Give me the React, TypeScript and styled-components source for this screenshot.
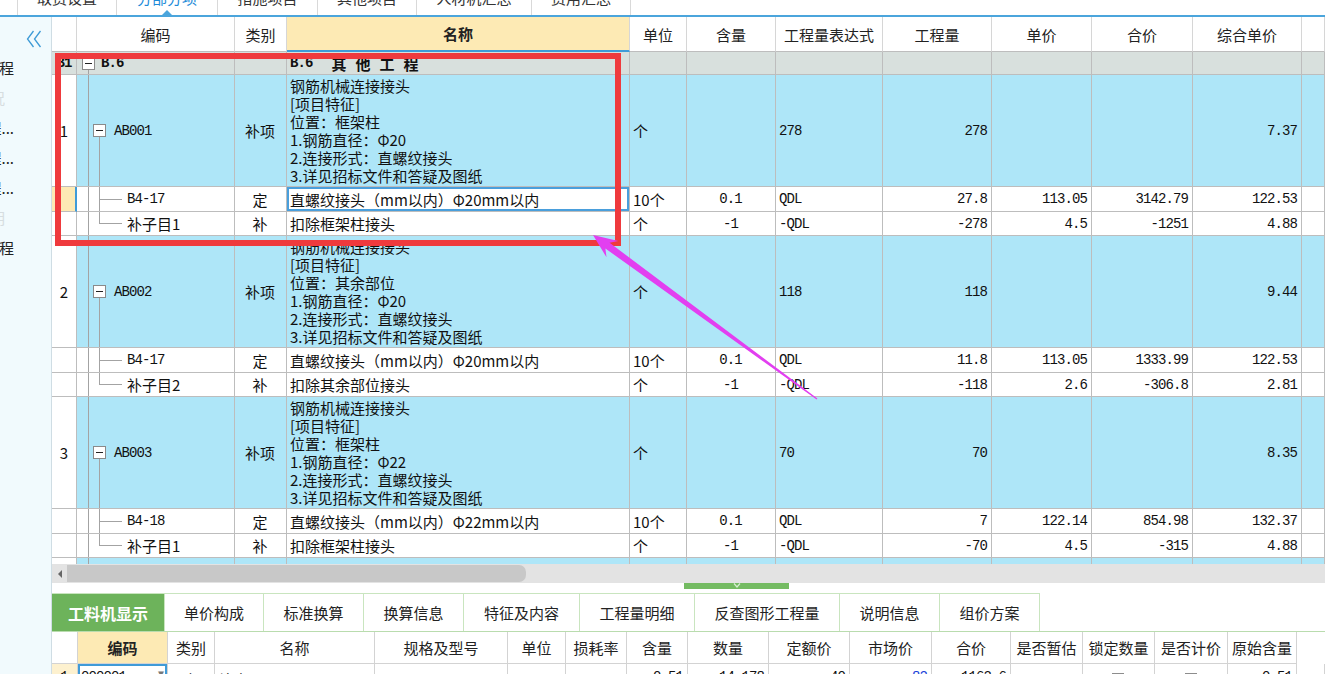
import React from "react";
import styled, { createGlobalStyle } from "styled-components";

const CJK = `"Noto Sans CJK SC", "Noto Sans", sans-serif`;
const NUM = `"Liberation Mono", "DejaVu Sans Mono", monospace`;
const LINE = "#bdbdbd";
const TREE = "#a3a3a3";
const SKY = "#aee6f8";
const GROUP = "#d8e0dd";
const CREAM = "#fdeab4";
const ACCENT = "#3f9bd8";
const LEAF = "#6db35b";

const GlobalStyle = createGlobalStyle`
  html, body { margin: 0; padding: 0; background: #fff; overflow: hidden; }
  body { font-family: ${CJK}; color: #111; }
`;

const Screen = styled.div`
  position: relative;
  width: 1325px;
  height: 674px;
  overflow: hidden;
  display: flex;
  flex-direction: column;
`;

/* ---------- top module tabs ---------- */
const TopBar = styled.div`
  flex: none;
  height: 17px;
  box-sizing: border-box;
  border-bottom: 2px solid #4ba5dc;
  padding-left: 17px;
  display: flex;
  overflow: hidden;
`;

const TopTab = styled.div<{ $w: number; $active?: boolean }>`
  position: relative;
  width: ${(p) => p.$w}px;
  height: 15px;
  box-sizing: border-box;
  border-right: 1px solid #d9d9d9;
  &:first-child { border-left: 1px solid #d9d9d9; }
  display: flex;
  justify-content: center;
  align-items: flex-start;
  font-size: 15px;
  color: ${(p) => (p.$active ? "#1c8ad8" : "#333")};
  span { line-height: 30px; margin-top: -17px; }
  ${(p) =>
    p.$active &&
    `&::after {
      content: "";
      position: absolute;
      bottom: 0;
      left: 50%;
      transform: translateX(-50%);
      border-left: 5px solid transparent;
      border-right: 5px solid transparent;
      border-bottom: 5px solid #4ba5dc;
    }`}
`;

/* ---------- layout ---------- */
const Body = styled.div`
  flex: 1;
  display: flex;
  min-height: 0;
`;

const Sidebar = styled.div`
  flex: none;
  width: 52px;
  box-sizing: border-box;
  background: #f1fafd;
  border-right: 1px solid #cfdde4;
  padding-top: 12px;
  display: flex;
  flex-direction: column;
`;

const Collapse = styled.div`
  height: 18px;
  padding-left: 26px;
  margin-bottom: 5px;
`;

const SideItem = styled.div<{ $faint?: boolean }>`
  width: ${(p) => (p.$faint ? 5 : 14)}px;
  height: 30px;
  overflow: hidden;
  display: flex;
  justify-content: flex-end;
  align-items: center;
  white-space: nowrap;
  font-size: 15px;
  color: ${(p) => (p.$faint ? "#d6dde0" : "#222")};
`;

const Main = styled.div`
  flex: 1;
  min-width: 0;
  display: flex;
  flex-direction: column;
  overflow: hidden;
`;

/* ---------- upper grid ---------- */
const COLS = "25px 158px 52px 343px 57px 89px 107px 109px 100px 101px 109px 23px";

const Viewport = styled.div`
  flex: none;
  height: 547px;
  overflow: hidden;
`;

const Row = styled.div<{ $h: number; $bg: string }>`
  display: grid;
  grid-template-columns: ${COLS};
  height: ${(p) => p.$h}px;
  background: ${(p) => p.$bg};
`;

const HeadCell = styled.div<{ $hl?: boolean }>`
  box-sizing: border-box;
  border-right: 1px solid #d6d6d6;
  border-bottom: ${(p) => (p.$hl ? `2px solid ${ACCENT}` : `1px solid ${LINE}`)};
  background: ${(p) => (p.$hl ? CREAM : "#fff")};
  font-weight: ${(p) => (p.$hl ? 700 : 400)};
  display: flex;
  align-items: center;
  justify-content: center;
  font-size: 15px;
  color: #222;
  white-space: nowrap;
  overflow: hidden;
`;

type Align = "left" | "center" | "right";

const Cell = styled.div<{ $align?: Align; $num?: boolean }>`
  box-sizing: border-box;
  min-width: 0;
  border-right: 1px solid ${LINE};
  border-bottom: 1px solid ${LINE};
  display: flex;
  align-items: center;
  justify-content: ${(p) =>
    p.$align === "right" ? "flex-end" : p.$align === "center" ? "center" : "flex-start"};
  padding: 0 4px 0 3px;
  overflow: hidden;
  white-space: nowrap;
  font-family: ${(p) => (p.$num ? NUM : CJK)};
  font-size: ${(p) => (p.$num ? "14px" : "15px")};
  letter-spacing: ${(p) => (p.$num ? "-0.9px" : "0")};
  color: #111;
`;

const RowNo = styled(Cell)<{ $sel?: boolean; $tint?: string }>`
  justify-content: center;
  padding: 0;
  background: ${(p) => (p.$sel ? CREAM : p.$tint ?? "#fff")};
  border-right: ${(p) => (p.$sel ? `2px solid ${ACCENT}` : `1px solid ${LINE}`)};
`;

type Tree = "root" | "item" | "first" | "last";
const bar = (x: string, y: string, w: string, h: string) =>
  `linear-gradient(${TREE}, ${TREE}) ${x} ${y} / ${w} ${h} no-repeat`;
const treeBg: Record<Tree, string> = {
  root: bar("11px", "100%", "1px", "50%"),
  item: [bar("11px", "0", "1px", "100%"), bar("22px", "100%", "1px", "50%")].join(","),
  first: [bar("11px", "0", "1px", "100%"), bar("22px", "0", "1px", "100%"), bar("22px", "50%", "23px", "1px")].join(","),
  last: [bar("11px", "0", "1px", "100%"), bar("22px", "0", "1px", "50%"), bar("22px", "50%", "23px", "1px")].join(","),
};

const CodeCell = styled(Cell)<{ $tree: Tree; $indent: number }>`
  padding-left: ${(p) => p.$indent}px;
  background: ${(p) => treeBg[p.$tree]};
`;

const Expander = styled.span<{ $gap: number }>`
  flex: none;
  width: 13px;
  height: 13px;
  box-sizing: border-box;
  border: 1px solid #8a8a8a;
  background: #fff;
  margin-right: ${(p) => p.$gap}px;
  display: flex;
  align-items: center;
  justify-content: center;
  &::before { content: ""; width: 7px; height: 1px; background: #222; }
`;

const NameCell = styled(Cell)<{ $selected?: boolean }>`
  ${(p) => p.$selected && `box-shadow: inset 0 0 0 2px #4a9fdc;`}
`;

const NameStack = styled.div`
  display: flex;
  flex-direction: column;
  line-height: 18px;
`;

const GroupCode = styled.span`
  font-family: ${NUM};
  font-weight: 700;
  font-size: 14px;
  letter-spacing: -0.9px;
`;

const GroupName = styled.span`
  font-weight: 700;
  letter-spacing: 9px;
  margin-left: 19px;
`;

/* ---------- scroll / splitter ---------- */
const HScroll = styled.div`
  flex: none;
  height: 19px;
  background: #e3e3e3;
  display: flex;
  align-items: center;
  padding-left: 6px;
  gap: 5px;
`;

const ScrollArrow = styled.div`
  border-top: 4px solid transparent;
  border-bottom: 4px solid transparent;
  border-right: 4px solid #666;
`;

const Thumb = styled.div`
  width: 459px;
  height: 17px;
  background: #c8c8c8;
  border-radius: 0 7px 7px 0;
`;

const Splitter = styled.div`
  flex: none;
  height: 10px;
  padding-left: 632px;
`;

const Handle = styled.div`
  width: 105px;
  height: 6px;
  background: #74bb62;
  display: flex;
  justify-content: center;
`;

/* ---------- detail pane ---------- */
const DetailTabs = styled.div`
  flex: none;
  height: 39px;
  box-sizing: border-box;
  border-bottom: 1px solid #b9dcae;
  display: flex;
`;

const DetailTab = styled.div<{ $w: number; $active?: boolean }>`
  width: ${(p) => p.$w}px;
  box-sizing: border-box;
  border: 1px solid #c9e5bf;
  border-left: none;
  border-bottom: none;
  display: flex;
  align-items: center;
  justify-content: center;
  font-size: ${(p) => (p.$active ? "16px" : "15px")};
  font-weight: ${(p) => (p.$active ? 700 : 400)};
  color: ${(p) => (p.$active ? "#fff" : "#222")};
  background: ${(p) => (p.$active ? LEAF : "#fff")};
`;

const DCOLS = "26px 90px 47px 160px 133px 58px 61px 61px 81px 81px 82px 79px 72px 72px 73px 69px 28px";

const DetailRow = styled.div<{ $h: number }>`
  flex: none;
  display: grid;
  grid-template-columns: ${DCOLS};
  height: ${(p) => p.$h}px;
`;

const DHead = styled.div<{ $hl?: boolean; $bare?: boolean }>`
  box-sizing: border-box;
  border-right: ${(p) => (p.$bare ? "none" : "1px solid #d3d3d3")};
  border-bottom: ${(p) => (p.$bare ? "none" : "1px solid #d3d3d3")};
  background: ${(p) => (p.$hl ? CREAM : "#fff")};
  font-weight: ${(p) => (p.$hl ? 700 : 400)};
  display: flex;
  align-items: center;
  justify-content: center;
  font-size: 15px;
  color: #222;
  white-space: nowrap;
  overflow: hidden;
`;

const DCell = styled(Cell)<{ $tint?: string; $blue?: boolean }>`
  align-items: flex-start;
  padding-top: 5px;
  border-color: #d3d3d3;
  background: ${(p) => p.$tint ?? "transparent"};
  color: ${(p) => (p.$blue ? "#1740d8" : "#111")};
`;

const PickCell = styled(DCell)`
  box-shadow: inset 0 0 0 2px ${ACCENT};
  justify-content: space-between;
`;

const Check = styled.span`
  width: 12px;
  height: 12px;
  box-sizing: border-box;
  border: 1px solid #8d8d8d;
  background: #fff;
  margin-top: 4px;
`;

/* ---------- annotations ---------- */
const RedFrame = styled.div`
  position: absolute;
  left: 55px;
  top: 53px;
  width: 566px;
  height: 193px;
  box-sizing: border-box;
  border: 6px solid #ef3a3d;
  pointer-events: none;
`;

const ArrowLayer = styled.svg`
  position: absolute;
  left: 0;
  top: 0;
  pointer-events: none;
`;

/* ---------- data ---------- */
type Sub = {
  code: string;
  kind: string;
  name: string;
  unit: string;
  qty: string;
  expr: string;
  amount: string;
  price: string;
  total: string;
  unitPrice: string;
  selected?: boolean;
};

type Item = {
  no: string;
  code: string;
  name: string[];
  unit: string;
  expr: string;
  amount: string;
  unitPrice: string;
  subs: Sub[];
};

const spec = (place: string, dia: string) => [
  "钢筋机械连接接头",
  "[项目特征]",
  `位置：${place}`,
  `1.钢筋直径：${dia}`,
  "2.连接形式：直螺纹接头",
  "3.详见招标文件和答疑及图纸",
];

const items: Item[] = [
  {
    no: "1", code: "AB001", name: spec("框架柱", "Φ20"), unit: "个", expr: "278", amount: "278", unitPrice: "7.37",
    subs: [
      { code: "B4-17", kind: "定", name: "直螺纹接头（mm以内）Φ20mm以内", unit: "10个", qty: "0.1", expr: "QDL", amount: "27.8", price: "113.05", total: "3142.79", unitPrice: "122.53", selected: true },
      { code: "补子目1", kind: "补", name: "扣除框架柱接头", unit: "个", qty: "-1", expr: "-QDL", amount: "-278", price: "4.5", total: "-1251", unitPrice: "4.88" },
    ],
  },
  {
    no: "2", code: "AB002", name: spec("其余部位", "Φ20"), unit: "个", expr: "118", amount: "118", unitPrice: "9.44",
    subs: [
      { code: "B4-17", kind: "定", name: "直螺纹接头（mm以内）Φ20mm以内", unit: "10个", qty: "0.1", expr: "QDL", amount: "11.8", price: "113.05", total: "1333.99", unitPrice: "122.53" },
      { code: "补子目2", kind: "补", name: "扣除其余部位接头", unit: "个", qty: "-1", expr: "-QDL", amount: "-118", price: "2.6", total: "-306.8", unitPrice: "2.81" },
    ],
  },
  {
    no: "3", code: "AB003", name: spec("框架柱", "Φ22"), unit: "个", expr: "70", amount: "70", unitPrice: "8.35",
    subs: [
      { code: "B4-18", kind: "定", name: "直螺纹接头（mm以内）Φ22mm以内", unit: "10个", qty: "0.1", expr: "QDL", amount: "7", price: "122.14", total: "854.98", unitPrice: "132.37" },
      { code: "补子目1", kind: "补", name: "扣除框架柱接头", unit: "个", qty: "-1", expr: "-QDL", amount: "-70", price: "4.5", total: "-315", unitPrice: "4.88" },
    ],
  },
];

const topTabs: [string, number, boolean?][] = [
  ["取费设置", 100],
  ["分部分项", 101, true],
  ["措施项目", 100],
  ["其他项目", 99],
  ["人材机汇总", 115],
  ["费用汇总", 99],
];

const headers = ["", "编码", "类别", "名称", "单位", "含量", "工程量表达式", "工程量", "单价", "合价", "综合单价", ""];

const sideItems: [string, boolean?][] = [
  ["建筑工程"],
  ["整体概况", true],
  ["钢筋工程..."],
  ["门窗工程..."],
  ["装饰工程..."],
  ["其他说明", true],
  ["安装工程"],
];

const detailTabs: [string, number, boolean?][] = [
  ["工料机显示", 113, true],
  ["单价构成", 99],
  ["标准换算", 100],
  ["换算信息", 100],
  ["特征及内容", 116],
  ["工程量明细", 115],
  ["反查图形工程量", 145],
  ["说明信息", 100],
  ["组价方案", 100],
];

const detailHeaders = ["", "编码", "类别", "名称", "规格及型号", "单位", "损耗率", "含量", "数量", "定额价", "市场价", "合价", "是否暂估", "锁定数量", "是否计价", "原始含量", ""];

/* ---------- parts ---------- */
const ItemBlock = ({ item }: { item: Item }) => (
  <>
    <Row $h={112} $bg={SKY}>
      <RowNo>{item.no}</RowNo>
      <CodeCell $tree="item" $indent={16} $num>
        <Expander $gap={8} />
        {item.code}
      </CodeCell>
      <Cell $align="center">补项</Cell>
      <Cell>
        <NameStack>
          {item.name.map((line) => (
            <span key={line}>{line}</span>
          ))}
        </NameStack>
      </Cell>
      <Cell>{item.unit}</Cell>
      <Cell />
      <Cell $num>{item.expr}</Cell>
      <Cell $num $align="right">{item.amount}</Cell>
      <Cell />
      <Cell />
      <Cell $num $align="right">{item.unitPrice}</Cell>
      <Cell />
    </Row>
    {item.subs.map((s, i) => (
      <Row key={s.code + i} $h={i === 0 ? 25 : 24} $bg="#fff">
        <RowNo $sel={s.selected} />
        <CodeCell $tree={i === item.subs.length - 1 ? "last" : "first"} $indent={50} $num={!/[^\x00-\x7f]/.test(s.code)}>
          {s.code}
        </CodeCell>
        <Cell $align="center">{s.kind}</Cell>
        <NameCell $selected={s.selected}>{s.name}</NameCell>
        <Cell>{s.unit}</Cell>
        <Cell $num $align="center">{s.qty}</Cell>
        <Cell $num>{s.expr}</Cell>
        <Cell $num $align="right">{s.amount}</Cell>
        <Cell $num $align="right">{s.price}</Cell>
        <Cell $num $align="right">{s.total}</Cell>
        <Cell $num $align="right">{s.unitPrice}</Cell>
        <Cell />
      </Row>
    ))}
  </>
);

const arrowPoints = [
  [593, 235],
  [618.3, 241.1],
  [609.6, 242.8],
  [817.4, 398.4],
  [816.6, 399.6],
  [605.4, 248.5],
  [606.5, 257.3],
]
  .map((p) => p.join(","))
  .join(" ");

export default function App() {
  return (
    <>
      <GlobalStyle />
      <Screen>
        <TopBar>
          {topTabs.map(([label, w, active]) => (
            <TopTab key={label} $w={w} $active={active}>
              <span>{label}</span>
            </TopTab>
          ))}
        </TopBar>

        <Body>
          <Sidebar>
            <Collapse>
              <svg width="16" height="18" viewBox="0 0 16 18">
                <path d="M7.5 1 L1.5 9 L7.5 17 M14.5 1 L8.5 9 L14.5 17" fill="none" stroke="#3d9ad6" strokeWidth="1.3" />
              </svg>
            </Collapse>
            {sideItems.map(([label, faint]) => (
              <SideItem key={label} $faint={faint}>
                {label}
              </SideItem>
            ))}
          </Sidebar>

          <Main>
            <Viewport>
              <Row $h={35} $bg="#fff">
                {headers.map((h, i) => (
                  <HeadCell key={i} $hl={h === "名称"}>
                    {h}
                  </HeadCell>
                ))}
              </Row>
              <Row $h={23} $bg={GROUP}>
                <RowNo $tint={GROUP} $num style={{ fontWeight: 700 }}>
                  B1
                </RowNo>
                <CodeCell $tree="root" $indent={5} $num style={{ fontWeight: 700 }}>
                  <Expander $gap={6} />
                  B.6
                </CodeCell>
                <Cell />
                <Cell>
                  <GroupCode>B.6</GroupCode>
                  <GroupName>其他工程</GroupName>
                </Cell>
                <Cell />
                <Cell />
                <Cell />
                <Cell />
                <Cell />
                <Cell />
                <Cell />
                <Cell />
              </Row>
              {items.map((item) => (
                <ItemBlock key={item.no} item={item} />
              ))}
              {/* next item, scrolled out of view below */}
              <Row $h={112} $bg={SKY}>
                <RowNo />
                <CodeCell $tree="item" $indent={16} />
                <Cell />
                <Cell />
                <Cell />
                <Cell />
                <Cell />
                <Cell />
                <Cell />
                <Cell />
                <Cell />
                <Cell />
              </Row>
            </Viewport>

            <HScroll>
              <ScrollArrow />
              <Thumb />
            </HScroll>

            <Splitter>
              <Handle>
                <svg width="10" height="6" viewBox="0 0 10 6">
                  <path d="M2 0.5 L5 4 L8 0.5" fill="none" stroke="#d8eed2" strokeWidth="1.2" />
                </svg>
              </Handle>
            </Splitter>

            <DetailTabs>
              {detailTabs.map(([label, w, active]) => (
                <DetailTab key={label} $w={w} $active={active}>
                  {label}
                </DetailTab>
              ))}
            </DetailTabs>

            <DetailRow $h={32}>
              {detailHeaders.map((h, i) => (
                <DHead key={i} $hl={h === "编码"} $bare={i === detailHeaders.length - 1}>
                  {h}
                </DHead>
              ))}
            </DetailRow>

            <DetailRow $h={28}>
              <DCell $align="center" $num $tint="#fdf1cf">1</DCell>
              <PickCell $num>
                000001
                <span style={{ color: "#777", fontSize: 10 }}>▼</span>
              </PickCell>
              <DCell $align="center">人</DCell>
              <DCell>综合工日</DCell>
              <DCell />
              <DCell $align="center">工日</DCell>
              <DCell />
              <DCell $num $align="right">0.51</DCell>
              <DCell $num $align="right">14.178</DCell>
              <DCell $num $align="right">40</DCell>
              <DCell $num $align="right" $blue>82</DCell>
              <DCell $num $align="right">1162.6</DCell>
              <DCell />
              <DCell $align="center">
                <Check />
              </DCell>
              <DCell $align="center">
                <Check />
              </DCell>
              <DCell $num $align="right">0.51</DCell>
              <DCell />
            </DetailRow>
          </Main>
        </Body>

        <RedFrame />
        <ArrowLayer width="1325" height="674" viewBox="0 0 1325 674">
          <polygon points={arrowPoints} fill="#e23ff0" />
        </ArrowLayer>
      </Screen>
    </>
  );
}
